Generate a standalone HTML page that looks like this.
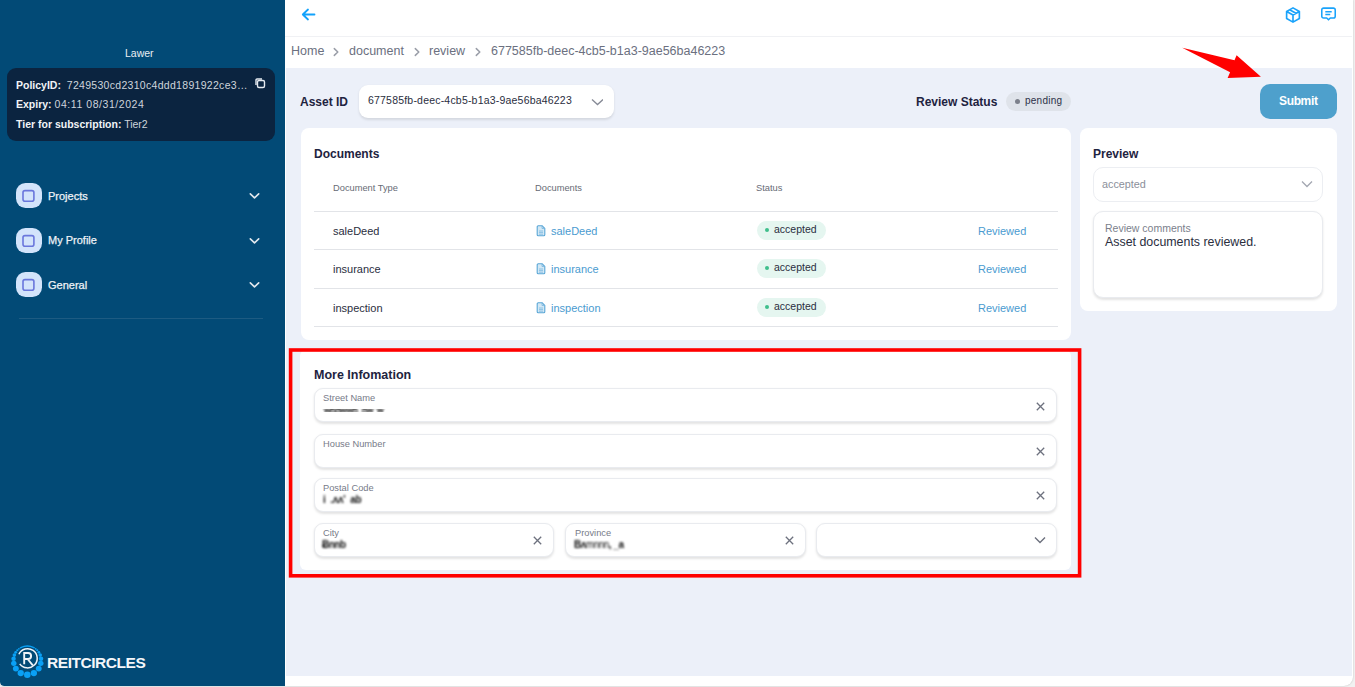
<!DOCTYPE html>
<html><head><meta charset="utf-8">
<style>
*{box-sizing:border-box;margin:0;padding:0}
html,body{width:1355px;height:687px;overflow:hidden;background:#f1f1f1;font-family:"Liberation Sans",sans-serif}
.abs{position:absolute}
#win{position:absolute;left:0;top:0;width:1353px;height:686px;background:#fff;border-radius:0 0 9px 4px;overflow:hidden;box-shadow:0 0 2px rgba(0,0,0,0.22)}
#side{position:absolute;left:0;top:0;width:284.6px;height:686px;background:#024a76;border-radius:0 0 0 4px}
#topbar{position:absolute;left:285px;top:0;width:1067px;height:37px;background:#fff;border-bottom:1px solid #f0f1f4}
#crumb{position:absolute;left:285px;top:37px;width:1067px;height:31px;background:#fff}
#main{position:absolute;left:285px;top:68px;width:1067.3px;height:608px;background:#ecf0f9}
.t{position:absolute;white-space:nowrap;line-height:1}
.card{position:absolute;background:#fff;border-radius:8px}
.field{position:absolute;background:#fff;border:1px solid #e9ebef;border-radius:9px;box-shadow:0 1.5px 2.5px rgba(0,0,0,0.11)}
.lbl{position:absolute;font-size:9.3px;color:#777b89;line-height:1;white-space:nowrap}
.x{position:absolute;width:10px;height:10px}
.hr{position:absolute;height:1px;background:#e2e4e8}
.pill{position:absolute;border-radius:10px}
</style></head>
<body>
<div id="win">
 <div id="side">
  <div class="t" style="left:125px;top:48px;font-size:10.5px;color:#e9eef3">Lawer</div>
  <div class="abs" style="left:7px;top:68px;width:268px;height:73px;background:#0b2440;border-radius:9px"></div>
  <div class="t" style="left:16px;top:80px;font-size:10.5px;color:#f2f4f7"><b>PolicyID:</b>&nbsp; <span style="color:#cfd5dc;letter-spacing:0.3px">7249530cd2310c4ddd1891922ce3…</span></div>
  <div class="t" style="left:16px;top:99px;font-size:10.5px;color:#f2f4f7"><b>Expiry:</b> <span style="color:#cfd5dc;letter-spacing:0.55px">04:11 08/31/2024</span></div>
  <div class="t" style="left:16px;top:119px;font-size:10.5px;color:#f2f4f7"><b>Tier for subscription:</b> <span style="color:#cfd5dc">Tier2</span></div>
  <svg class="abs" style="left:254px;top:77px" width="12" height="12" viewBox="0 0 12 12"><rect x="3.5" y="3.5" width="7" height="7" rx="1.5" fill="none" stroke="#e6eaf0" stroke-width="1.4"/><path d="M2 8V3a1 1 0 0 1 1-1h5" fill="none" stroke="#e6eaf0" stroke-width="1.4"/></svg>

  <!-- nav -->
  <div class="abs" style="left:15.5px;top:183px;width:26px;height:25px;background:#d3e4fb;border-radius:9.5px"></div>
  <svg class="abs" style="left:20px;top:187px" width="17" height="17" viewBox="0 0 17 17"><rect x="3" y="3.6" width="10.9" height="10.6" rx="2" fill="none" stroke="#6a77dc" stroke-width="1.6"/></svg>
  <div class="t" style="left:48px;top:191px;font-size:11px;color:#eef2f6;-webkit-text-stroke:0.25px #eef2f6">Projects</div>
  <svg class="abs" style="left:249px;top:192px" width="11" height="8" viewBox="0 0 11 8"><path d="M1.3 1.8l4.2 4 4.2-4" fill="none" stroke="#e2e8ee" stroke-width="1.6" stroke-linecap="round" stroke-linejoin="round"/></svg>

  <div class="abs" style="left:15.5px;top:228px;width:26px;height:25px;background:#d3e4fb;border-radius:9.5px"></div>
  <svg class="abs" style="left:20px;top:232px" width="17" height="17" viewBox="0 0 17 17"><rect x="3" y="3.6" width="10.9" height="10.6" rx="2" fill="none" stroke="#6a77dc" stroke-width="1.6"/></svg>
  <div class="t" style="left:48px;top:235px;font-size:11px;color:#eef2f6;-webkit-text-stroke:0.25px #eef2f6">My Profile</div>
  <svg class="abs" style="left:249px;top:237px" width="11" height="8" viewBox="0 0 11 8"><path d="M1.3 1.8l4.2 4 4.2-4" fill="none" stroke="#e2e8ee" stroke-width="1.6" stroke-linecap="round" stroke-linejoin="round"/></svg>

  <div class="abs" style="left:15.5px;top:272px;width:26px;height:25px;background:#d3e4fb;border-radius:9.5px"></div>
  <svg class="abs" style="left:20px;top:276px" width="17" height="17" viewBox="0 0 17 17"><rect x="3" y="3.6" width="10.9" height="10.6" rx="2" fill="none" stroke="#6a77dc" stroke-width="1.6"/></svg>
  <div class="t" style="left:48px;top:280px;font-size:11px;color:#eef2f6;-webkit-text-stroke:0.25px #eef2f6">General</div>
  <svg class="abs" style="left:249px;top:281px" width="11" height="8" viewBox="0 0 11 8"><path d="M1.3 1.8l4.2 4 4.2-4" fill="none" stroke="#e2e8ee" stroke-width="1.6" stroke-linecap="round" stroke-linejoin="round"/></svg>

  <div class="abs" style="left:19px;top:318px;width:244px;height:1px;background:#1d5b82"></div>

  <!-- logo -->
  <svg class="abs" style="left:8px;top:642px" width="40" height="40" viewBox="0 0 40 40">
   <g fill="#0aa0f5"><circle cx="19.30" cy="32.70" r="3.30"/><circle cx="25.88" cy="31.09" r="3.15"/><circle cx="12.73" cy="31.09" r="3.15"/><circle cx="30.74" cy="26.58" r="2.95"/><circle cx="7.86" cy="26.58" r="2.95"/><circle cx="32.80" cy="21.36" r="2.70"/><circle cx="5.80" cy="21.36" r="2.70"/><circle cx="33.04" cy="16.78" r="2.25"/><circle cx="5.56" cy="16.78" r="2.25"/><circle cx="32.22" cy="13.12" r="1.80"/><circle cx="6.38" cy="13.12" r="1.80"/><circle cx="30.88" cy="10.32" r="1.40"/><circle cx="7.72" cy="10.32" r="1.40"/><circle cx="29.27" cy="8.23" r="1.10"/><circle cx="9.33" cy="8.23" r="1.10"/><circle cx="27.69" cy="6.78" r="0.90"/><circle cx="10.91" cy="6.78" r="0.90"/><circle cx="26.09" cy="5.77" r="0.80"/><circle cx="12.51" cy="5.77" r="0.80"/></g>
   <path d="M12.71 5.56 A15.60 15.60 0 0 1 25.89 5.56" fill="none" stroke="#0aa0f5" stroke-width="1.3"/>
   <path d="M10.90 12.24 A9.60 9.60 0 1 1 11.74 21.81" fill="none" stroke="#eef3f8" stroke-width="1.5"/>
   <path d="M16.2 22.3V11h3.9a3 3 0 0 1 0 6h-3.9 M19.6 17l5.2 6.3" fill="none" stroke="#eef3f8" stroke-width="1.9"/>
  </svg>
  <div class="t" style="left:47px;top:655px;font-size:15.5px;font-weight:bold;color:#f4f7fa;letter-spacing:-0.45px">REITCIRCLES</div>
 </div>

 <div id="topbar">
  <svg class="abs" style="left:16px;top:8px" width="15" height="13" viewBox="0 0 15 13"><path d="M13.5 6.5H2M7 1.5L1.8 6.5 7 11.5" fill="none" stroke="#12a2fb" stroke-width="1.8" stroke-linecap="round" stroke-linejoin="round"/></svg>
  <svg class="abs" style="left:999px;top:5.7px" width="18" height="18" viewBox="0 0 24 24"><path d="M12 2.5l8.5 4.75v9.5L12 21.5l-8.5-4.75v-9.5z M3.5 7.25L12 12l8.5-4.75 M12 12v9.5 M7.5 4.9l8.5 4.8" fill="none" stroke="#1aa3fb" stroke-width="2.2" stroke-linejoin="round"/></svg>
  <svg class="abs" style="left:1034.6px;top:6.3px" width="17" height="17" viewBox="0 0 24 24"><path d="M5 3h14a2.5 2.5 0 0 1 2.5 2.5v9A2.5 2.5 0 0 1 19 17h-4.5L12 19.5 9.5 17H5a2.5 2.5 0 0 1-2.5-2.5v-9A2.5 2.5 0 0 1 5 3z M7.5 8h9 M7.5 12h7" fill="none" stroke="#1aa3fb" stroke-width="2.2" stroke-linejoin="round"/></svg>
 </div>
 <div id="crumb">
  <div class="t" style="left:6px;top:8px;font-size:12.5px;color:#6b7080">Home</div>
  <svg class="abs" style="left:48px;top:10px" width="6" height="10" viewBox="0 0 6 10"><path d="M1.3 1.6l3.5 3.4-3.5 3.4" fill="none" stroke="#9a9ea8" stroke-width="1.5" stroke-linecap="round" stroke-linejoin="round"/></svg>
  <div class="t" style="left:64px;top:8px;font-size:12.5px;color:#6b7080">document</div>
  <svg class="abs" style="left:129px;top:10px" width="6" height="10" viewBox="0 0 6 10"><path d="M1.3 1.6l3.5 3.4-3.5 3.4" fill="none" stroke="#9a9ea8" stroke-width="1.5" stroke-linecap="round" stroke-linejoin="round"/></svg>
  <div class="t" style="left:144px;top:8px;font-size:12.5px;color:#6b7080">review</div>
  <svg class="abs" style="left:190px;top:10px" width="6" height="10" viewBox="0 0 6 10"><path d="M1.3 1.6l3.5 3.4-3.5 3.4" fill="none" stroke="#9a9ea8" stroke-width="1.5" stroke-linecap="round" stroke-linejoin="round"/></svg>
  <div class="t" style="left:206px;top:8px;font-size:12.5px;color:#6b7080">677585fb-deec-4cb5-b1a3-9ae56ba46223</div>
 </div>

 <div id="main">
  <!-- asset row: coordinates relative to main (left 285, top 68) -->
  <div class="t" style="left:15px;top:28px;font-size:12px;font-weight:bold;color:#1e2340">Asset ID</div>
  <div class="abs" style="left:74px;top:17px;width:255px;height:33px;background:#fff;border-radius:9px;box-shadow:0 1.5px 2.5px rgba(0,0,0,0.1)"></div>
  <div class="t" style="left:83px;top:27px;font-size:10.5px;color:#2a2e3e;letter-spacing:0.2px">677585fb-deec-4cb5-b1a3-9ae56ba46223</div>
  <svg class="abs" style="left:306px;top:29.5px" width="12" height="8" viewBox="0 0 12 8"><path d="M1 1.5l5.5 5 5.5-5" fill="none" stroke="#868a96" stroke-width="1.3"/></svg>

  <div class="t" style="left:631px;top:28px;font-size:12px;font-weight:bold;color:#1e2340">Review Status</div>
  <div class="pill" style="left:721px;top:24px;width:65px;height:19px;background:#dfe3ea"></div>
  <div class="abs" style="left:730px;top:31px;width:5px;height:5px;border-radius:50%;background:#7c808b"></div>
  <div class="t" style="left:740px;top:28px;font-size:10px;color:#2c3048;letter-spacing:0.25px">pending</div>

  <div class="abs" style="left:975.3px;top:16px;width:76.5px;height:35px;background:#4ea0cc;border-radius:10px"></div>
  <div class="t" style="left:994px;top:27.3px;font-size:12px;font-weight:bold;color:#fff;letter-spacing:-0.35px">Submit</div>

  <!-- documents card -->
  <div class="card" style="left:16px;top:60px;width:770px;height:212px"></div>
  <div class="t" style="left:29px;top:80px;font-size:12px;font-weight:bold;color:#1e2340">Documents</div>
  <div class="t" style="left:48px;top:116px;font-size:9.3px;color:#676b76">Document Type</div>
  <div class="t" style="left:250px;top:116px;font-size:9.3px;color:#676b76">Documents</div>
  <div class="t" style="left:471px;top:116px;font-size:9.3px;color:#676b76">Status</div>
  <div class="hr" style="left:29px;top:143px;width:744px"></div>
  <div class="hr" style="left:29px;top:181px;width:744px"></div>
  <div class="hr" style="left:29px;top:220px;width:744px"></div>
  <div class="hr" style="left:29px;top:258px;width:744px"></div>

  <!-- row1 -->
  <div class="t" style="left:48px;top:158px;font-size:11px;color:#2a2e3e">saleDeed</div>
  <svg class="abs" style="left:251px;top:157px" width="10" height="12" viewBox="0 0 10 12"><path d="M1.2 1.8a1 1 0 0 1 1-1h4l2.6 2.6v6.4a1 1 0 0 1-1 1H2.2a1 1 0 0 1-1-1z" fill="#d3e8f5" stroke="#5aa6d6" stroke-width="1.1"/><path d="M6 .9v2.6h2.7 M3 6h4 M3 7.6h4 M3 9.2h4" fill="none" stroke="#7ab8df" stroke-width=".8"/></svg>
<div class="t" style="left:266px;top:158px;font-size:11px;color:#4a9bd0">saleDeed</div>
  <div class="pill" style="left:472px;top:153px;width:69px;height:19px;background:#e5f6f0"></div>
  <div class="abs" style="left:480px;top:160px;width:4px;height:4px;border-radius:50%;background:#3fbf8c"></div>
  <div class="t" style="left:489px;top:156px;font-size:10.5px;color:#2a2e3e">accepted</div>
  <div class="t" style="left:693px;top:158px;font-size:11px;color:#4a9bd0">Reviewed</div>
  <!-- row2 -->
  <div class="t" style="left:48px;top:196px;font-size:11px;color:#2a2e3e">insurance</div>
  <svg class="abs" style="left:251px;top:195px" width="10" height="12" viewBox="0 0 10 12"><path d="M1.2 1.8a1 1 0 0 1 1-1h4l2.6 2.6v6.4a1 1 0 0 1-1 1H2.2a1 1 0 0 1-1-1z" fill="#d3e8f5" stroke="#5aa6d6" stroke-width="1.1"/><path d="M6 .9v2.6h2.7 M3 6h4 M3 7.6h4 M3 9.2h4" fill="none" stroke="#7ab8df" stroke-width=".8"/></svg>
<div class="t" style="left:266px;top:196px;font-size:11px;color:#4a9bd0">insurance</div>
  <div class="pill" style="left:472px;top:191px;width:69px;height:19px;background:#e5f6f0"></div>
  <div class="abs" style="left:480px;top:198px;width:4px;height:4px;border-radius:50%;background:#3fbf8c"></div>
  <div class="t" style="left:489px;top:194px;font-size:10.5px;color:#2a2e3e">accepted</div>
  <div class="t" style="left:693px;top:196px;font-size:11px;color:#4a9bd0">Reviewed</div>
  <!-- row3 -->
  <div class="t" style="left:48px;top:235px;font-size:11px;color:#2a2e3e">inspection</div>
  <svg class="abs" style="left:251px;top:234px" width="10" height="12" viewBox="0 0 10 12"><path d="M1.2 1.8a1 1 0 0 1 1-1h4l2.6 2.6v6.4a1 1 0 0 1-1 1H2.2a1 1 0 0 1-1-1z" fill="#d3e8f5" stroke="#5aa6d6" stroke-width="1.1"/><path d="M6 .9v2.6h2.7 M3 6h4 M3 7.6h4 M3 9.2h4" fill="none" stroke="#7ab8df" stroke-width=".8"/></svg>
<div class="t" style="left:266px;top:235px;font-size:11px;color:#4a9bd0">inspection</div>
  <div class="pill" style="left:472px;top:230px;width:69px;height:19px;background:#e5f6f0"></div>
  <div class="abs" style="left:480px;top:237px;width:4px;height:4px;border-radius:50%;background:#3fbf8c"></div>
  <div class="t" style="left:489px;top:233px;font-size:10.5px;color:#2a2e3e">accepted</div>
  <div class="t" style="left:693px;top:235px;font-size:11px;color:#4a9bd0">Reviewed</div>

  <!-- preview card -->
  <div class="card" style="left:795px;top:60px;width:257px;height:183px"></div>
  <div class="t" style="left:808px;top:80px;font-size:12px;font-weight:bold;color:#1e2340">Preview</div>
  <div class="abs" style="left:808px;top:99px;width:230px;height:35px;border:1px solid #eceef2;border-radius:10px;background:#fff"></div>
  <div class="t" style="left:817px;top:111px;font-size:10.8px;color:#8b8f9a">accepted</div>
  <svg class="abs" style="left:1016px;top:112px" width="12" height="8" viewBox="0 0 12 8"><path d="M1 1.5l5 5 5-5" fill="none" stroke="#a3a7b1" stroke-width="1.3"/></svg>
  <div class="field" style="left:808px;top:143px;width:230px;height:87px;border-radius:10px"></div>
  <div class="t" style="left:820px;top:155px;font-size:10.5px;color:#7b7f8c">Review comments</div>
  <div class="t" style="left:820px;top:167.5px;font-size:12.4px;color:#2a2e3e">Asset documents reviewed.</div>

  <!-- more info card -->
  <div class="card" style="left:15.3px;top:282px;width:770.5px;height:220px;border-radius:6px"></div>
  <div class="t" style="left:29px;top:301px;font-size:12.5px;font-weight:bold;color:#1e2340">More Infomation</div>
  <div class="field" style="left:29px;top:320.3px;width:743px;height:34px"></div>
  <div class="lbl" style="left:38px;top:326.3px">Street Name</div>
  <svg class="x" style="left:750.5px;top:333.6px;width:9px;height:9px" viewBox="0 0 9 9"><path d="M.8 .8l7.4 7.4M8.2 .8L.8 8.2" stroke="#6d717e" stroke-width="1.3"/></svg>
  <div class="field" style="left:29px;top:365.5px;width:743px;height:34px"></div>
  <div class="lbl" style="left:38px;top:371.5px">House Number</div>
  <svg class="x" style="left:750.5px;top:378.8px;width:9px;height:9px" viewBox="0 0 9 9"><path d="M.8 .8l7.4 7.4M8.2 .8L.8 8.2" stroke="#6d717e" stroke-width="1.3"/></svg>
  <div class="field" style="left:29px;top:409.7px;width:743px;height:34px"></div>
  <div class="lbl" style="left:38px;top:415.7px">Postal Code</div>
  <svg class="x" style="left:750.5px;top:423.0px;width:9px;height:9px" viewBox="0 0 9 9"><path d="M.8 .8l7.4 7.4M8.2 .8L.8 8.2" stroke="#6d717e" stroke-width="1.3"/></svg>
  <div class="field" style="left:29px;top:454.7px;width:240px;height:34px"></div>
  <div class="lbl" style="left:38px;top:460.7px">City</div>
  <svg class="x" style="left:247.5px;top:468.0px;width:9px;height:9px" viewBox="0 0 9 9"><path d="M.8 .8l7.4 7.4M8.2 .8L.8 8.2" stroke="#6d717e" stroke-width="1.3"/></svg>
  <div class="field" style="left:279.5px;top:454.7px;width:241.5px;height:34px"></div>
  <div class="lbl" style="left:290px;top:460.7px">Province</div>
  <svg class="x" style="left:499.5px;top:468.0px;width:9px;height:9px" viewBox="0 0 9 9"><path d="M.8 .8l7.4 7.4M8.2 .8L.8 8.2" stroke="#6d717e" stroke-width="1.3"/></svg>
  <div class="field" style="left:530.5px;top:454.7px;width:241.5px;height:34px"></div>
  <svg class="abs" style="left:749.0px;top:468.2px" width="12" height="8" viewBox="0 0 12 8"><path d="M1 1.5l5 5 5-5" fill="none" stroke="#6d717e" stroke-width="1.4"/></svg>

 </div>
 <svg class="abs" style="left:0;top:0" width="1352" height="100"><polygon points="1182.2,47.8 1234.5,60.2 1236.6,55.3 1260.9,76.8 1227.6,78 1230.1,72.3" fill="#ff0000"/></svg>
<div class="abs" style="left:324px;top:402.5px;font-size:8.5px;font-weight:bold;color:#111;filter:blur(0.8px);white-space:nowrap;letter-spacing:-0.3px;transform:scaleY(0.6);transform-origin:0 100%">wnnwwn &nbsp;nw &nbsp;w</div>
 <div class="abs" style="left:323px;top:493.5px;font-size:10px;font-weight:bold;color:#111;filter:blur(0.8px);white-space:nowrap;letter-spacing:-0.3px">i<span style="letter-spacing:2px"> </span>.ʌʌ' &nbsp;ab</div>
 <div class="abs" style="left:322px;top:538.5px;font-size:10px;font-weight:bold;color:#111;filter:blur(0.8px);white-space:nowrap;letter-spacing:-0.5px">Ƀnnb</div>
 <div class="abs" style="left:574px;top:538.5px;font-size:10px;font-weight:bold;color:#111;filter:blur(0.8px);white-space:nowrap;letter-spacing:-0.5px">Bʌ<span style="font-weight:normal">mnnn</span>, _a</div>
 <div class="abs" style="left:284.6px;top:68px;width:1.2px;height:608px;background:#fff"></div>
 <!-- red border -->
 <svg class="abs" style="left:0;top:0" width="1353" height="600"><rect x="290.6" y="350" width="789" height="225.8" fill="none" stroke="#ff0000" stroke-width="3.6"/></svg>
</div>
</body></html>
